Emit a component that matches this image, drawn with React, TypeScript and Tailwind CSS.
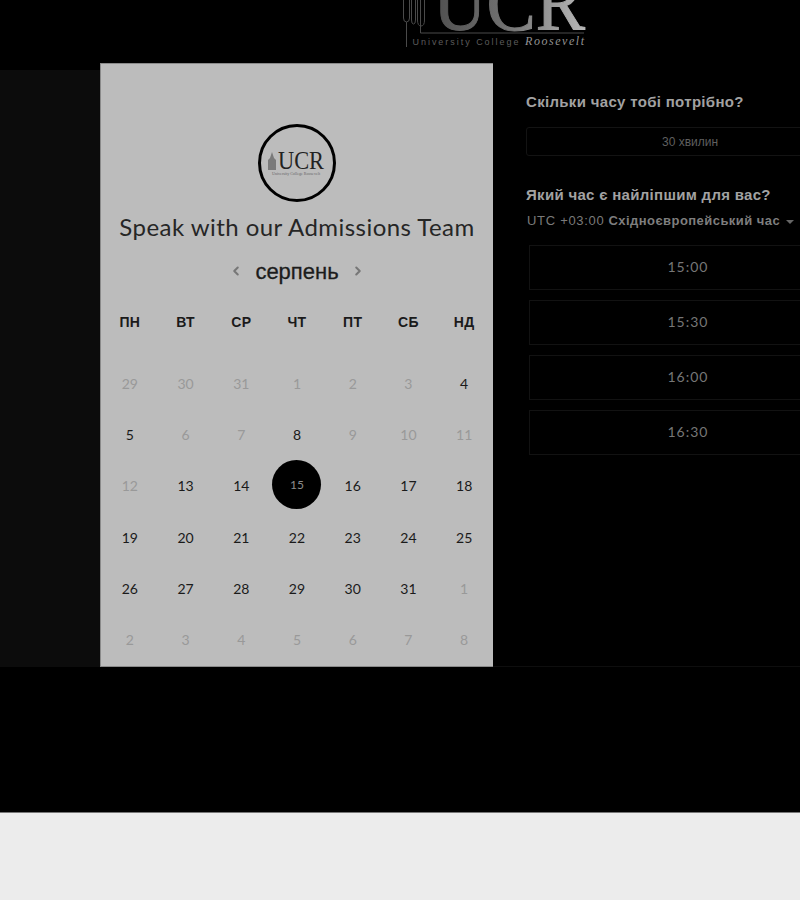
import React from "react";
import { ChevronLeft, ChevronRight } from "lucide-react";

const weekDays = ["ПН", "ВТ", "СР", "ЧТ", "ПТ", "СБ", "НД"];

// active = day can be booked (dark text)
const days: { label: number; active?: boolean; selected?: boolean }[] = [
  { label: 29 }, { label: 30 }, { label: 31 }, { label: 1 }, { label: 2 }, { label: 3 }, { label: 4, active: true },
  { label: 5, active: true }, { label: 6 }, { label: 7 }, { label: 8, active: true }, { label: 9 }, { label: 10 }, { label: 11 },
  { label: 12 }, { label: 13, active: true }, { label: 14, active: true }, { label: 15, selected: true }, { label: 16, active: true }, { label: 17, active: true }, { label: 18, active: true },
  { label: 19, active: true }, { label: 20, active: true }, { label: 21, active: true }, { label: 22, active: true }, { label: 23, active: true }, { label: 24, active: true }, { label: 25, active: true },
  { label: 26, active: true }, { label: 27, active: true }, { label: 28, active: true }, { label: 29, active: true }, { label: 30, active: true }, { label: 31, active: true }, { label: 1 },
  { label: 2 }, { label: 3 }, { label: 4 }, { label: 5 }, { label: 6 }, { label: 7 }, { label: 8 },
];

const slots = ["15:00", "15:30", "16:00", "16:30"];

const HeaderLogo = () => (
  <svg width="200" height="50" viewBox="0 0 200 50" className="block">
    <defs>
      <linearGradient id="ucrFill" x1="0" x2="1" y1="0" y2="0">
        <stop offset="0" stopColor="#4f4f4f" />
        <stop offset="0.45" stopColor="#6f6f6f" />
        <stop offset="1" stopColor="#b8b8b8" />
      </linearGradient>
    </defs>
    <g fill="none" stroke="#4a4a4a" strokeWidth="1">
      <path d="M3.500 0V18Q3.500 22 6.500 22T9.500 18V0" />
      <path d="M11.500 0V20Q11.500 24 13.500 24T15.500 20V0" />
      <path d="M17.500 0V20Q17.500 26 21 26T24.500 20V0" />
      <path d="M6.500 22V47" />
      <path d="M20.500 0V33H184" />
    </g>
    <text
      x="33"
      y="30"
      fontFamily="'Liberation Serif', serif"
      fontSize="80"
      fill="url(#ucrFill)"
      stroke="url(#ucrFill)"
      strokeWidth="1"
      textLength="152"
      lengthAdjust="spacingAndGlyphs"
    >
      UCR
    </text>
    <text x="12.500" y="45" fontFamily="'Liberation Sans', sans-serif" fontSize="9" fill="#5c5c5c" textLength="106">
      University College
    </text>
    <text
      x="125"
      y="45"
      fontFamily="'Liberation Serif', serif"
      fontStyle="italic"
      fontSize="12"
      fill="#929292"
      textLength="59"
    >
      Roosevelt
    </text>
  </svg>
);

const BadgeLogo = () => (
  <div className="flex size-[78px] items-center justify-center rounded-full border-[3px] border-black">
    <svg width="66" height="34" viewBox="0 0 66 34">
      <path d="M4 24V14L6 12L8 6L10 12L12 14V24Z" fill="#7a7a7a" />
      <text
        x="14"
        y="23"
        fontFamily="'Liberation Serif', serif"
        fontSize="26"
        fill="#222222"
        textLength="46"
        lengthAdjust="spacingAndGlyphs"
      >
        UCR
      </text>
      <text x="8" y="29" fontFamily="'Liberation Serif', serif" fontSize="4" fill="#666666" textLength="48">
        University College Roosevelt
      </text>
    </svg>
  </div>
);

const App: React.FC = () => {
  return (
    <div className="flex h-[900px] w-[800px] flex-col overflow-hidden bg-black font-['Liberation_Sans',sans-serif]">
      <header className="flex h-[63px] shrink-0 overflow-hidden pl-[400px]">
        <HeaderLogo />
      </header>

      <main className="flex h-[604px] shrink-0">
        <div className="mt-[7px] w-[100px] shrink-0 bg-[#0c0c0c]" />

        <section className="flex w-[393px] shrink-0 flex-col items-center border-t border-b border-l border-[#8a8a8a] bg-[#bcbcbc] pt-[60px]">
          <BadgeLogo />
          <h1 className="mt-[6px] h-[38px] font-['Lato',sans-serif] text-[24px] leading-[38px] tracking-[0.45px] whitespace-nowrap text-[#262626]">
            Speak with our Admissions Team
          </h1>
          <div className="mt-[10px] flex h-[30px] items-center">
            <ChevronLeft className="size-[14px] text-[#777777]" strokeWidth={3.5} />
            <span className="mx-[12px] text-[22px] text-[#1c1c1c] [-webkit-text-stroke:0.3px_#1c1c1c]">серпень</span>
            <ChevronRight className="size-[14px] text-[#777777]" strokeWidth={3.5} />
          </div>

          <div className="mt-[16px] grid w-[390px] grid-cols-7 text-center text-[14px] leading-[40px] font-bold tracking-[0.3px] text-[#1a1a1a]">
            {weekDays.map((day) => (
              <span key={day}>{day}</span>
            ))}
          </div>

          <div className="mt-[16px] grid w-[390px] grid-cols-7 grid-rows-[repeat(6,51.2px)] font-['Lato',sans-serif] text-[14px]">
            {days.map((day, index) => (
              <div key={index} className="flex items-center justify-center">
                {day.selected ? (
                  <span className="flex size-[49px] -translate-y-[1px] items-center justify-center rounded-full bg-black text-[12px] text-[#8c8c8c]">
                    {day.label}
                  </span>
                ) : (
                  <span className={day.active ? "text-[#1a1a1a]" : "text-[#999999]"}>{day.label}</span>
                )}
              </div>
            ))}
          </div>
        </section>

        <aside className="min-w-0 flex-1 overflow-hidden border-b border-[#0e0e0e] pt-[30px] pl-[33px]">
          <div className="w-[340px]">
            <h2 className="text-[15px] leading-[18px] font-bold tracking-[0.32px] text-[#a2a2a2]">Скільки часу тобі потрібно?</h2>
            <div className="mt-[16px] flex h-[29px] w-[328px] items-center justify-center rounded-[3px] border border-[#131313] text-[12px] text-[#5f5f5f]">
              30 хвилин
            </div>

            <h2 className="mt-[30px] text-[15px] leading-[18px] font-bold tracking-[0.3px] text-[#a2a2a2]">Який час є найліпшим для вас?</h2>
            <div className="mt-[8px] flex items-center pl-px text-[13px] leading-[18px] whitespace-nowrap text-[#7a7a7a]">
              <span className="tracking-[0.7px]">UTC +03:00</span>
              <span className="ml-[4px] font-bold tracking-[0.45px] text-[#7e7e7e]">Східноєвропейський час</span>
              <span className="mt-px ml-[6px] size-0 border-x-[4px] border-t-[4px] border-x-transparent border-t-[#666666]" />
            </div>

            <div className="mt-[15px] ml-[3px] flex w-[318px] flex-col gap-[10px]">
              {slots.map((slot) => (
                <div
                  key={slot}
                  className="flex h-[45px] items-center justify-center border border-[#121212] pb-[2px] font-['Lato',sans-serif] text-[14px] tracking-[1px] text-[#767676]"
                >
                  {slot}
                </div>
              ))}
            </div>
          </div>
        </aside>
      </main>

      <div className="h-[145px] shrink-0 bg-black" />
      <footer className="flex-1 border-t border-[#777777] bg-[#ececec]" />
    </div>
  );
};

export default App;
